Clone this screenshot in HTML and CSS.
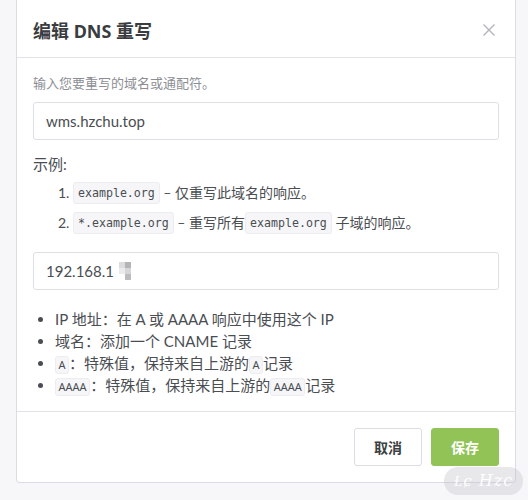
FILE: index.html
```html
<!DOCTYPE html>
<html lang="zh-CN">
<head>
<meta charset="utf-8">
<title>编辑 DNS 重写</title>
<link rel="stylesheet" href="styles.css">
</head>
<body>
<div class="modal">
  <div class="modal-header">
    <h2 class="modal-title">编辑 DNS 重写</h2>
    <button class="close" aria-label="关闭">
      <svg width="12" height="12" viewBox="0 0 12 12"><path d="M0.5 0.5 L11.5 11.5 M11.5 0.5 L0.5 11.5" stroke="#b4b4bc" stroke-width="1.4" fill="none"/></svg>
    </button>
  </div>
  <div class="modal-body">
    <div class="hint">输入您要重写的域名或通配符。</div>
    <div class="input">wms.hzchu.top</div>
    <div class="examples-title">示例:</div>
    <ol class="examples">
      <li><code class="code">example.org</code> – 仅重写此域名的响应。</li>
      <li><code class="code">*.example.org</code> – 重写所有<code class="code">example.org</code> 子域的响应。</li>
    </ol>
    <div class="input ip">192.168.1<span class="blur"><i class="c1"></i><i class="c2"></i><i class="c3"></i><i class="c4"></i><i class="c5"></i><i class="c6"></i></span></div>
    <ul class="notes">
      <li>IP 地址：在 A 或 AAAA 响应中使用这个 IP</li>
      <li>域名：添加一个 CNAME 记录</li>
      <li><code class="code sm">A</code>：特殊值，保持来自上游的<code class="code sm">A</code>记录</li>
      <li><code class="code sm">AAAA</code>：特殊值，保持来自上游的<code class="code sm">AAAA</code>记录</li>
    </ul>
  </div>
  <div class="modal-footer">
    <button class="btn btn-secondary">取消</button>
    <button class="btn btn-success">保存</button>
  </div>
</div>
<div class="watermark"><span class="wm-mark">Ɫɕ</span> Hzc</div>
</body>
</html>
```
FILE: styles.css
```css
html, body {
  margin: 0;
  padding: 0;
}
body {
  background: #f7f7fa;
  font-family: Lato, "Noto Sans CJK SC", sans-serif;
  color: #4a4d52;
  width: 528px;
  height: 500px;
  overflow: hidden;
  position: relative;
}
.modal {
  margin-left: 16px;
  width: 500px;
  box-sizing: border-box;
  background: #fff;
  border: 1px solid #dcdce6;
  border-top: none;
  border-radius: 0 0 4px 4px;
}
.modal-header {
  height: 58px;
  box-sizing: border-box;
  display: flex;
  align-items: center;
  justify-content: space-between;
  padding: 2px 20px 0 16px;
  border-bottom: 1px solid #e2e2ec;
}
.modal-title {
  margin: 0;
  font-family: "Noto Sans", "Noto Sans CJK SC", sans-serif;
  font-size: 18px;
  font-weight: 700;
  color: #3a3c40;
}
.close {
  border: 0;
  background: none;
  padding: 0;
  width: 12px;
  height: 12px;
  display: flex;
}
.modal-body {
  padding: 16px 16px 15px 16px;
}
.hint {
  font-size: 13px;
  line-height: 18px;
  color: #8c8e94;
}
.input {
  margin-top: 10px;
  height: 38px;
  box-sizing: border-box;
  border: 1px solid #dedee8;
  border-radius: 3px;
  padding: 0 12px;
  display: flex;
  align-items: center;
  font-size: 15px;
  color: #4a4d52;
}
.examples-title {
  margin-top: 14px;
  font-size: 15px;
  line-height: 21px;
}
.examples {
  margin: 3px 0 0 0;
  padding-left: 40px;
  font-size: 14px;
  line-height: 30px;
}
.code {
  display: inline-block;
  font-family: "DejaVu Sans Mono", monospace;
  font-size: 11.6px;
  line-height: 16px;
  padding: 2px 4px;
  background: #f6f6f9;
  border: 1px solid #ececf1;
  border-radius: 3px;
  color: #4a4d52;
  vertical-align: middle;
  position: relative;
  top: -1px;
}
.code.sm {
  font-family: "Noto Sans", sans-serif;
  font-size: 11px;
  line-height: 14px;
  padding: 1px 2.5px;
  top: 0;
}
.ip {
  margin-top: 14px;
}
.blur {
  display: inline-grid;
  grid-template-columns: 6px 6px;
  grid-template-rows: 6px 6px 6px;
  margin-left: 5px;
}
.blur i { display: block; }
.blur .c1 { background: #dcdcde; }
.blur .c2 { background: #b4b4b6; }
.blur .c3 { background: #ebebec; }
.blur .c4 { background: #d6d6d8; }
.blur .c5 { background: #ffffff; }
.blur .c6 { background: #bcbcbe; }
.notes {
  margin: 18px 0 0 0;
  padding-left: 22px;
  font-size: 15px;
  line-height: 22px;
}
.modal-footer {
  border-top: 1px solid #e2e2ec;
  padding: 16px;
  display: flex;
  justify-content: flex-end;
  gap: 9px;
}
.btn {
  width: 68px;
  height: 38px;
  border-radius: 3px;
  font-family: "Noto Sans CJK SC", sans-serif;
  font-size: 14px;
  font-weight: 700;
  cursor: pointer;
}
.btn-secondary {
  background: #fff;
  border: 1px solid #dcdce6;
  color: #3d3f44;
}
.btn-success {
  background: #92c357;
  border: 1px solid #92c357;
  color: #fff;
}
.watermark {
  position: absolute;
  left: 444px;
  top: 467px;
  width: 79px;
  height: 28px;
  border-radius: 14px;
  background: rgba(190, 190, 198, 0.35);
  color: rgba(255, 255, 255, 0.95);
  font-family: "DejaVu Serif", serif;
  font-style: italic;
  font-size: 16px;
  line-height: 28px;
  text-align: center;
  letter-spacing: 1px;
}
.wm-mark {
  font-size: 15px;
}
```
